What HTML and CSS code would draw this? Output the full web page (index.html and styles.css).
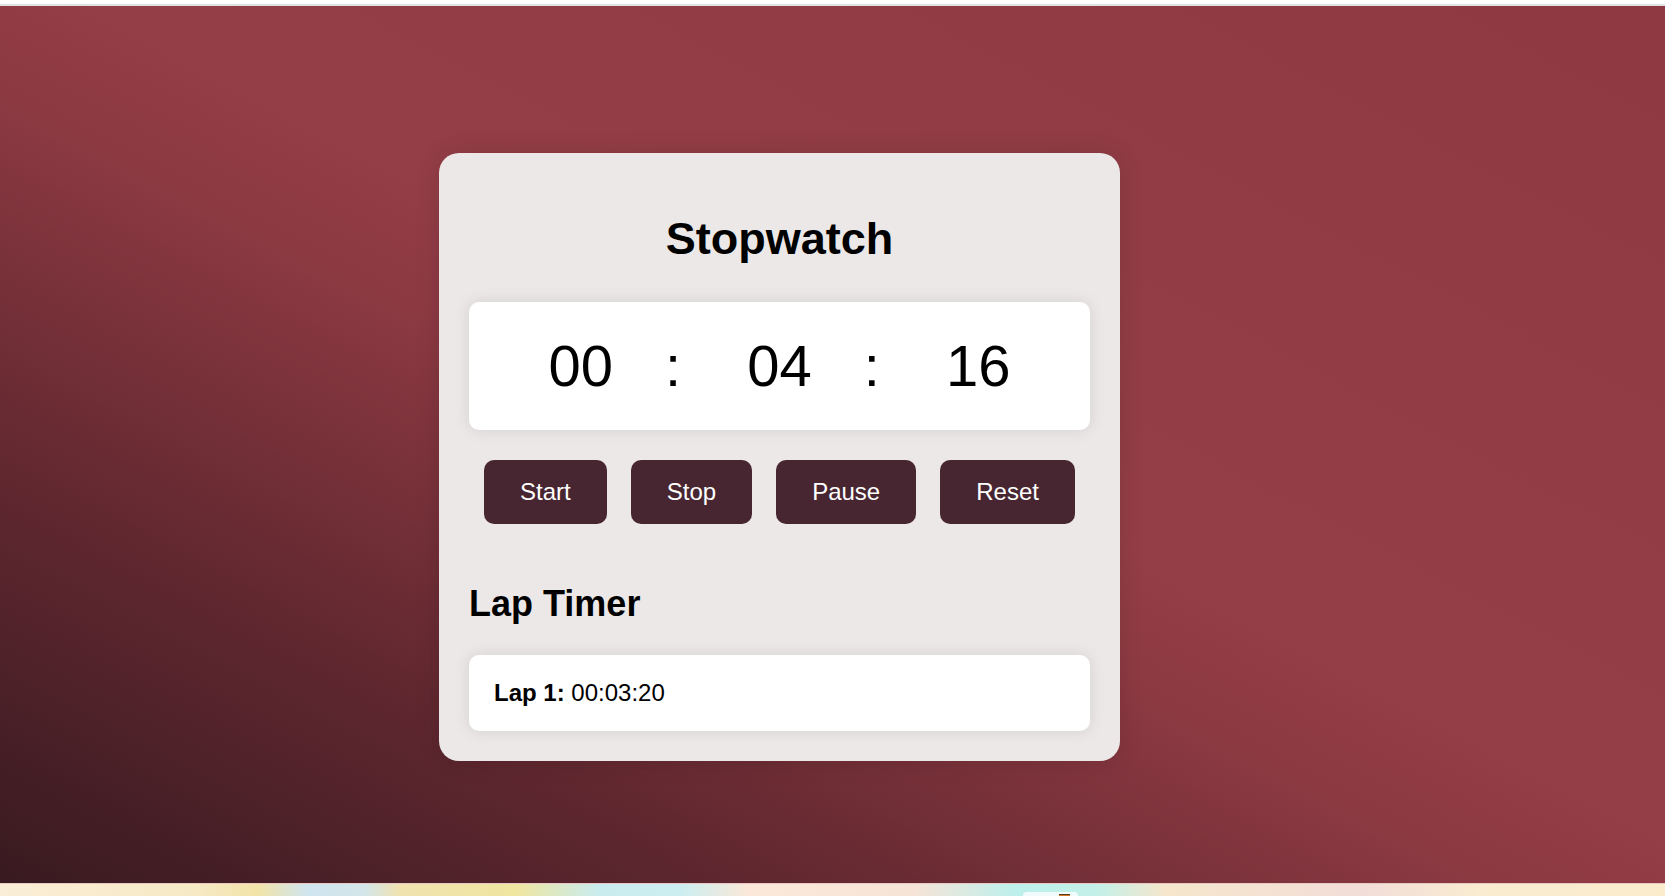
FILE: index.html
```html
<!DOCTYPE html>
<html lang="en">
<head>
<meta charset="utf-8">
<title>Stopwatch</title>
<link rel="stylesheet" href="styles.css">
</head>
<body>
<div class="top-strip"></div>
<main class="page">
  <section class="card">
    <h1 class="title">Stopwatch</h1>
    <div class="display">
      <span class="digits">00</span><span class="colon">:</span><span class="digits">04</span><span class="colon">:</span><span class="digits">16</span>
    </div>
    <div class="controls">
      <button class="btn">Start</button>
      <button class="btn">Stop</button>
      <button class="btn">Pause</button>
      <button class="btn">Reset</button>
    </div>
    <h2 class="lap-title">Lap Timer</h2>
    <ul class="laps">
      <li class="lap"><strong>Lap 1:</strong> 00:03:20</li>
    </ul>
  </section>
</main>
<div class="bottom-strip">
  <div class="tab"><span class="tab-icon"></span></div>
</div>
</body>
</html>
```
FILE: styles.css
```css
* { box-sizing: border-box; }
html, body { margin: 0; padding: 0; }
body {
  font-family: "Liberation Sans", Arial, sans-serif;
  color: #000;
  background: #fff;
  overflow: hidden;
}
.top-strip {
  height: 6px;
  background: #fff;
  border-bottom: 2px solid #e2e2e2;
}
.page {
  height: 877px;
  padding: 147px 0 0 439px;
  background: linear-gradient(to top right, #381a20 0%, #622830 24%, #8e3a43 46%, #943e47 53%, #8f3a43 100%);
}
.card {
  width: 681px;
  background: #ece8e8;
  border-radius: 20px;
  padding: 30px;
  box-shadow: 0 0 24px rgba(0, 0, 0, 0.12);
}
.title {
  margin: 30px 0 37px;
  font-size: 45px;
  font-weight: 700;
  text-align: center;
  line-height: normal;
}
.display {
  display: flex;
  justify-content: center;
  align-items: center;
  background: #fff;
  border-radius: 10px;
  padding: 30px 0;
  font-size: 58px;
  line-height: 68px;
  box-shadow: 0 0 16px rgba(0, 0, 0, 0.1);
}
.colon { margin: 0 66px 0 52px; }
.controls {
  display: flex;
  justify-content: center;
  gap: 24px;
  margin-top: 30px;
}
.btn {
  font-family: "Liberation Sans", Arial, sans-serif;
  font-size: 24px;
  line-height: normal;
  color: #fff;
  background: #472632;
  border: none;
  border-radius: 10px;
  padding: 18px 36px;
}
.lap-title {
  margin: 59px 0 30px;
  font-size: 36px;
  font-weight: 700;
  line-height: normal;
}
.laps {
  list-style: none;
  margin: 0;
  padding: 0;
}
.lap {
  background: #fff;
  border-radius: 10px;
  padding: 24px 25px;
  font-size: 24px;
  line-height: normal;
  box-shadow: 0 0 16px rgba(0, 0, 0, 0.1);
}
.bottom-strip {
  height: 13px;
  display: flex;
  align-items: flex-end;
  padding-left: 1023px;
  border-top: 1px solid #e9c9c4;
  background: linear-gradient(to right, #fbeed8 0%, #f6e9c4 12%, #f2e4a8 15.5%, #cfe5f0 18.5%, #d4e6e8 22%, #f1e3b0 24%, #efe6a0 31%, #c9ecef 36%, #cdeef0 41%, #fbe8d8 45%, #f6e4d8 55%, #bdf0ec 61%, #c4f0e8 66%, #f6e6cc 70%, #f2ddd8 82%, #f9ecd0 89%, #fbeccc 100%);
}
.tab {
  width: 55px;
  height: 4px;
  background: #f2fbfb;
  border-radius: 4px 4px 0 0;
  display: flex;
  padding-left: 36px;
  align-items: flex-end;
}
.tab-icon {
  width: 11px;
  height: 2px;
  background: #d07a2a;
  border-top: 1px solid #5a3a20;
}
```
